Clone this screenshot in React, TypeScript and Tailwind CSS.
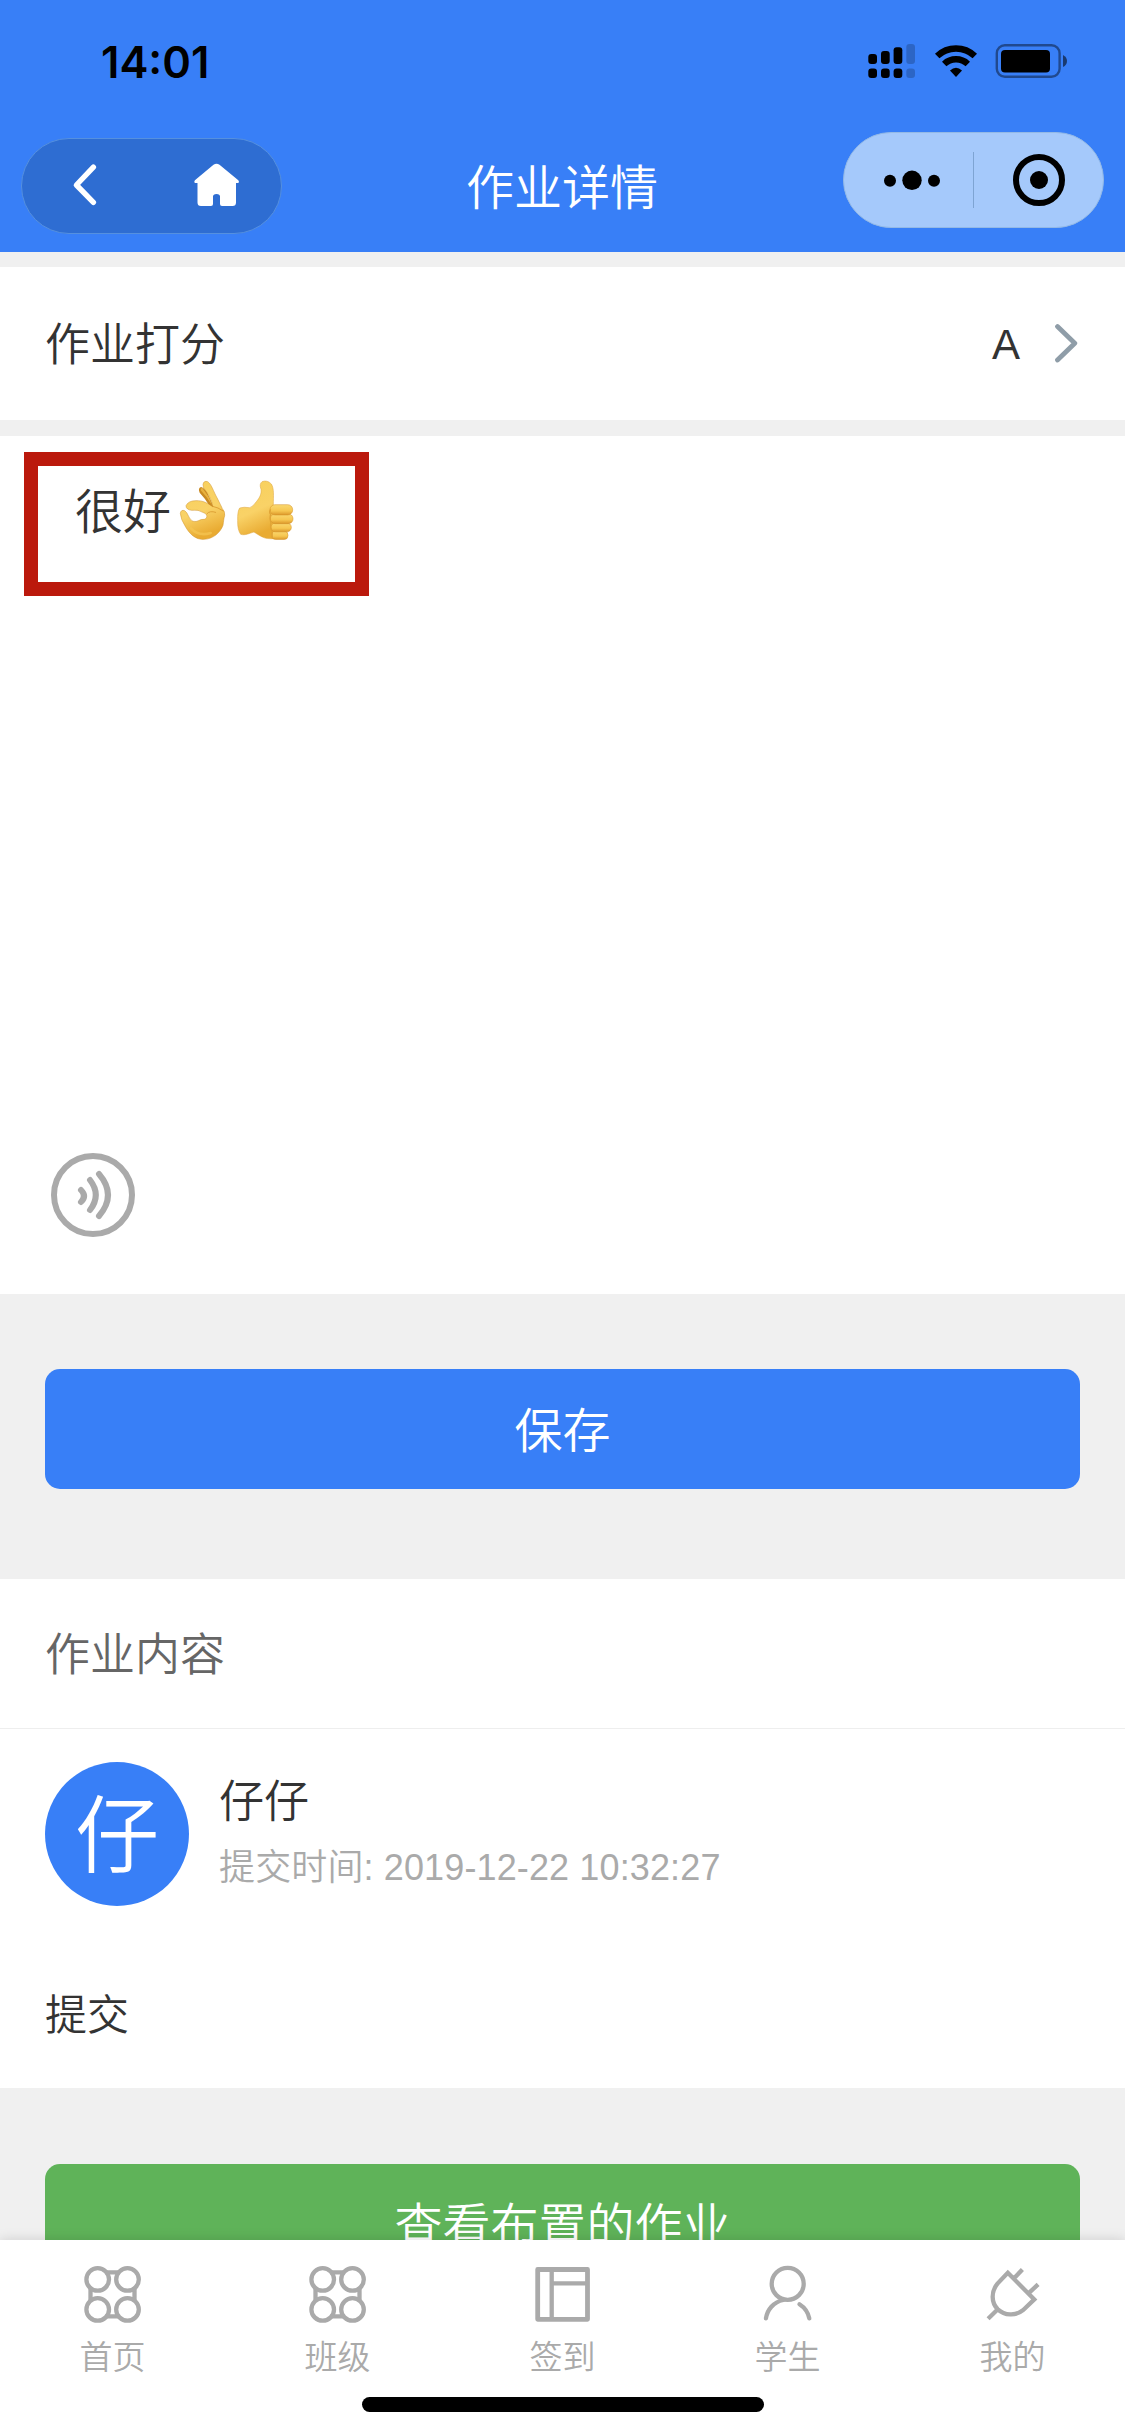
import { type ReactNode } from 'react';

interface TabItem {
  label: string;
  icon: ReactNode;
}

const gridIcon = (
  <>
    <path d="M23 7.4h14M23 51.4h14M8 22v14.5M52 22v14.5" />
    <circle cx="15.2" cy="14.4" r="11.3" />
    <circle cx="45" cy="14.4" r="11.3" />
    <circle cx="15.2" cy="44.4" r="11.3" />
    <circle cx="45" cy="44.4" r="11.3" />
  </>
);

const tabs: TabItem[] = [
  { label: '首页', icon: gridIcon },
  { label: '班级', icon: gridIcon },
  {
    label: '签到',
    icon: (
      <>
        <rect x="5.2" y="4.5" width="49.8" height="49.8" strokeWidth="4.8" strokeLinejoin="round" />
        <path d="M19.2 4.5v49.8M19 18.3h36" />
      </>
    ),
  },
  {
    label: '学生',
    icon: (
      <>
        <circle cx="30.2" cy="18.8" r="16" />
        <path d="M8.4 53.4c1.4-8.5 7.4-16.4 17.4-18.4M42 39.2c5 3.2 8.6 8 9.8 14.2" strokeLinecap="round" />
      </>
    ),
  },
  {
    label: '我的',
    icon: (
      <path d="M25.3 7.8 51.8 34.4 40.5 45.2C33 51.5 22 50.5 15.3 44.3 8.5 37.5 8.5 26.5 15 18.6ZM32.3 12.4l7.6-8M47 27.4l8.6-8M15.3 44.3 5.6 53.8" />
    ),
  },
];

function StatusIcons() {
  return (
    <svg className="mt-[44px] h-[34px] w-[200px]" viewBox="868 44 200 34" fill="black">
      <rect x="868.3" y="54" width="8.7" height="10" rx="3" />
      <rect x="881" y="51" width="8.7" height="13" rx="3" />
      <rect x="893.6" y="47.3" width="8.7" height="16.7" rx="3" />
      <rect x="906.3" y="44" width="8.7" height="20" rx="3" opacity=".2" />
      <rect x="868.3" y="68.6" width="8.7" height="9.4" rx="3" />
      <rect x="881" y="68.6" width="8.7" height="9.4" rx="3" />
      <rect x="893.6" y="68.6" width="8.7" height="9.4" rx="3" />
      <rect x="906.3" y="68.6" width="8.7" height="9.4" rx="3" opacity=".2" />
      <path d="M937.2 56a27.2 27.2 0 0 1 37.6 0M944.2 64a17.2 17.2 0 0 1 23.6 0" fill="none" stroke="black" strokeWidth="6.4" />
      <path d="M950 70.5q6-5.6 12 0l-6 6.5z" />
      <rect x="996.8" y="45.2" width="62.8" height="31.6" rx="8" fill="none" stroke="black" strokeWidth="2.4" opacity=".42" />
      <rect x="1001" y="50" width="49" height="22.6" rx="4" />
      <path d="M1063 55q4 2 4 6t-4 6z" opacity=".55" />
    </svg>
  );
}

function NavButtons() {
  return (
    <div className="mt-[6px] h-24 w-[261px] rounded-full border border-[#5590df] bg-[#2e6dd2]">
      <svg className="-mt-px -ml-px h-24 w-[261px]" viewBox="21 138 261 96" fill="white">
        <path d="M93.4 167.2 76.4 185l17 17.4" fill="none" stroke="white" strokeWidth="5.4" strokeLinecap="round" strokeLinejoin="round" />
        <path d="M213.5 164.8q3-2 6 0l18.8 15.4q1.8 2.8-1.3 2.8h-1v19.5q0 3.5-3.5 3.5h-10.5q-2 0-2-2v-7.5q0-2.5-3.5-2.5t-3.5 2.5v7.5q0 2-2 2h-10q-3.5 0-3.5-3.5V183h-1.3q-3 0-1.3-2.8z" />
      </svg>
    </div>
  );
}

function Capsule() {
  return (
    <div className="h-24 w-[261px] rounded-full border border-[#93b9e6] bg-[#a5c9fb]">
      <svg className="-mt-px -ml-px h-24 w-[261px]" viewBox="843 132 261 96">
        <circle cx="890" cy="180.7" r="6" />
        <circle cx="912" cy="180.3" r="9.7" />
        <circle cx="934" cy="180.7" r="6" />
        <path d="M973.5 152v56" stroke="#7ea4d3" />
        <circle cx="1039" cy="180" r="23" fill="none" stroke="black" strokeWidth="6" />
        <circle cx="1039" cy="180" r="9" />
      </svg>
    </div>
  );
}

function HandEmojis() {
  return (
    <svg className="ml-[6px] h-[63px] w-[119px]" viewBox="50 57 357 189" role="img" aria-label="👌👍">
      <defs>
        <linearGradient id="skin" x1="0" y1="0" x2="0.3" y2="1">
          <stop offset="0" stopColor="#f8d05a" />
          <stop offset="0.6" stopColor="#f9d267" />
          <stop offset="1" stopColor="#e9ab32" />
        </linearGradient>
        <linearGradient id="finger" x1="0" y1="0" x2="0" y2="1">
          <stop offset="0" stopColor="#fad870" />
          <stop offset="0.6" stopColor="#f6c650" />
          <stop offset="1" stopColor="#dc972a" />
        </linearGradient>
      </defs>
      {/* ok hand */}
      <path d="M118 98Q112 84 122 81Q130 82 140 96L160 140L150 142Q136 116 118 98Z" fill="#c98922" />
      <path d="M121 91Q120 84 126 84L146 112L155 136Q138 108 121 91Z" fill="#e7b13e" />
      <path
        d="M128 74Q130 61 142 65C154 73 158 92 172 117C178 130 184 140 186 146Q195 154 193 167C190 176 190 184 188 196C180 218 158 237 132 238C106 240 88 222 76 201Q61 178 60 160Q62 148 73 152C84 158 84 178 98 184C112 188 118 176 132 178C142 174 142 164 132 159Q113 147 94 151Q77 149 77 137Q84 122 107 122C128 121 143 130 158 141C154 118 143 100 130 84Z"
        fill="url(#skin)"
        stroke="#cf902a"
        strokeWidth="1.5"
      />
      <path d="M157 139Q173 142 189 153M140 161Q148 151 166 157" fill="none" stroke="#d9992e" strokeWidth="2.5" strokeLinecap="round" />
      <path d="M92 205Q115 230 151 219" fill="none" stroke="#f5c654" strokeWidth="8" strokeLinecap="round" opacity=".7" />
      {/* thumbs up */}
      <path
        d="M238 144Q250 140 268 143Q277 141 288 125C298 113 304 102 302 88Q296 72 305 65Q321 59 333 72C342 86 339 108 339 134L344 236Q318 238 304 230Q291 223 281 216C267 220 254 227 241 223Q231 209 232 182Q231 154 238 144Z"
        fill="url(#skin)"
        stroke="#dda33a"
        strokeWidth="1.5"
      />
      <g fill="url(#finger)" stroke="#d29027" strokeWidth="1.5">
        <rect x="334" y="213" width="49" height="25.5" rx="12" />
        <rect x="332" y="189" width="61" height="26.5" rx="13" />
        <rect x="330" y="162" width="68" height="29" rx="14" />
        <rect x="329" y="134" width="68" height="31" rx="15" />
      </g>
      <path d="M331 148Q325 155 331 164Q327 171 332 190Q328 197 335 214L336 235" fill="none" stroke="#e0a436" strokeWidth="4" />
    </svg>
  );
}

export default function App() {
  return (
    <div className="flex h-[2436px] w-[1125px] flex-col overflow-hidden bg-[#f0f0f0] font-['Liberation_Sans','Noto_Sans_CJK_SC',sans-serif] font-[350] text-[#333]">
      <header className="h-[252px] shrink-0 bg-[#387ff7]">
        <div className="flex h-[132px] justify-between pr-[57px] pl-[101px]">
          <span className="mt-[35px] font-['Inter',sans-serif] text-[43.5px] leading-[54px] font-semibold text-black">14:01</span>
          <StatusIcons />
        </div>
        <div className="flex justify-between px-[21px]">
          <NavButtons />
          <h1 className="mt-[9px] mr-px text-[48px] leading-[96px] font-[350] text-white">作业详情</h1>
          <Capsule />
        </div>
      </header>

      <section className="mt-[15px] flex h-[153px] shrink-0 items-center bg-white px-[45px] text-[45px]">
        <span className="flex-1 pt-[5px]">作业打分</span>
        <span className="mr-[33px] pt-px text-[42px]">A</span>
        <svg className="mr-px h-10 w-[26px]" viewBox="0 0 26 40" fill="none" stroke="#8f9da8" strokeWidth="4.8" strokeLinecap="round" strokeLinejoin="round">
          <path d="M4.5 2.6 21.8 19.3 4.5 36" />
        </svg>
      </section>

      <section className="mt-4 flex h-[858px] shrink-0 flex-col justify-between bg-white pt-4 pb-[57px]">
        <div className="ml-6 flex h-36 w-[345px] items-start border-[14px] border-[#bb190c] pt-[13px] pl-[37px]">
          <span className="pt-[2px] text-[48px] leading-[63px]">很好</span>
          <HandEmojis />
        </div>
        <svg className="ml-[51px] h-[84px] w-[84px]" viewBox="51 33 84 84" fill="none" stroke="#aaa" strokeWidth="6" strokeLinecap="round">
          <circle cx="93" cy="75" r="39" />
          <path d="M81 70q6 6 0 12M90 60q11.6 15 0 30M99 54q18 21 0 42" />
        </svg>
      </section>

      <button className="mx-[45px] mt-[75px] h-[120px] shrink-0 rounded-[15px] bg-[#387ff7] pt-[6px] text-[48px] font-[350] text-white">保存</button>

      <section className="mt-[90px] h-[509px] shrink-0 bg-white">
        <h2 className="h-[150px] border-b border-[#eee] px-[45px] text-[45px] leading-[153px] font-[350] text-[#666]">作业内容</h2>
        <div className="mt-[33px] flex px-[45px]">
          <div className="size-36 rounded-full bg-[#387ff7] text-center text-[84px] leading-[150px] text-white">仔</div>
          <div className="ml-[30px] pt-2">
            <div className="text-[45px] leading-[66px]">仔仔</div>
            <div className="text-[36px] leading-[64px] tracking-[0.13px] text-[#aaa]">提交时间: 2019-12-22 10:32:27</div>
          </div>
        </div>
        <p className="mt-[80px] px-[45px] text-[42px] leading-[60px]">提交</p>
      </section>

      <div className="mt-[76px] h-[76px] shrink-0 px-[45px]">
        <button className="h-[120px] w-full rounded-[15px] bg-[#5fb359] pt-[5px] text-[48px] font-[350] text-white">查看布置的作业</button>
      </div>

      <nav className="relative h-[196px] shrink-0 bg-white shadow-[0_0_12px_rgba(0,0,0,0.15)]">
        <div className="grid grid-cols-5 pt-[25px]">
          {tabs.map((tab) => (
            <div key={tab.label} className="flex flex-col items-center text-[33px] leading-[48px] text-[#aaa]">
              <svg className="mb-[9px] size-[60px]" viewBox="0.5 0 60 60" fill="none" stroke="currentColor" strokeWidth="4.3">
                {tab.icon}
              </svg>
              {tab.label}
            </div>
          ))}
        </div>
        <div className="mx-auto mt-[15px] h-[15px] w-[402px] rounded-full bg-black" />
      </nav>
    </div>
  );
}
